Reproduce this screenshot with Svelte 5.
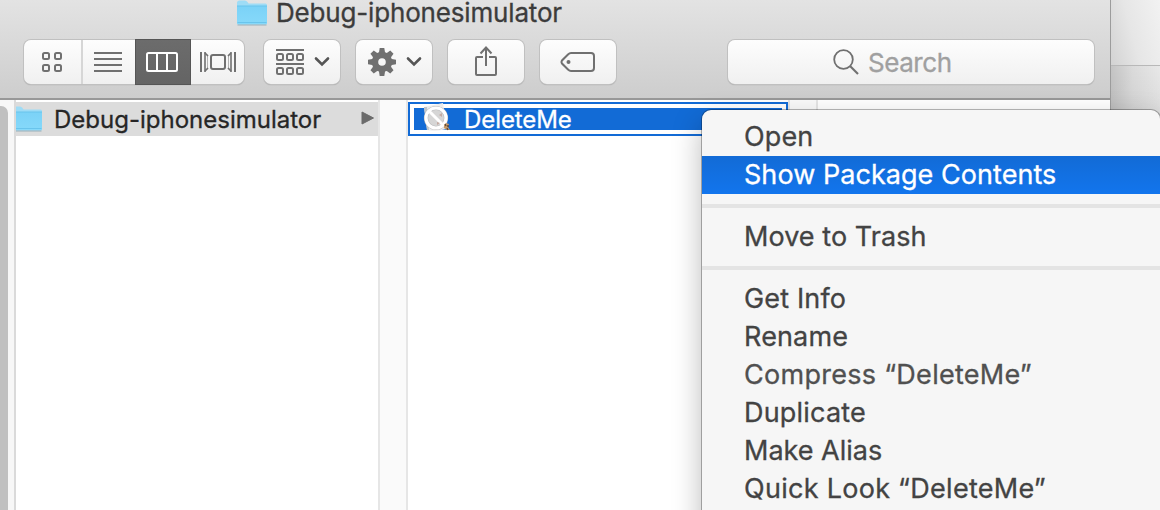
<script>
  const groups = [
    [{ label: 'Open', ls: 0.1 }, { label: 'Show Package Contents', ls: 0.05, active: true }],
    [{ label: 'Move to Trash', ls: 0.05 }],
    [
      { label: 'Get Info', ls: 0.15 },
      { label: 'Rename', ls: 0.15 },
      { label: 'Compress “DeleteMe”', ls: 0.28, soft: true },
      { label: 'Duplicate', ls: 0.2 },
      { label: 'Make Alias', ls: 0 },
      { label: 'Quick Look “DeleteMe”', ls: 0.28 }
    ]
  ];
  const teeth = [0, 45, 90, 135, 180, 225, 270, 315];
</script>

{#snippet folder()}
  <svg class="folder" width="32" height="28" viewBox="0 0 32 28">
    <path d="M1 25V4Q1 1.500 3.500 1.500H9Q10.500 1.500 11.500 3L12.500 4.500H29.500Q31 4.500 31 6V25Z" fill="#9edcf6" />
    <path d="M1 7H31V24Q31 25.500 29.500 25.500H2.500Q1 25.500 1 24Z" fill="url(#fold)" />
    <path d="M1 7H31M1.500 23.500H30.500" stroke="#69c4ec" stroke-width="1" />
    <path d="M1.500 26H30.500" stroke="#7f9eac" stroke-width="1" opacity=".7" />
    <defs><linearGradient id="fold" x2="0" y2="1"><stop stop-color="#7bd2f7" /><stop offset="1" stop-color="#86d9fa" /></linearGradient></defs>
  </svg>
{/snippet}

{#snippet chevron()}
  <svg width="16" height="12" viewBox="0 0 16 12"><path d="M2 2.500L8 8.500L14 2.500" fill="none" stroke="#555" stroke-width="2.600" stroke-linecap="round" /></svg>
{/snippet}

<div class="screen">
  <div class="backdrop"><div class="upper"></div><div class="lower"></div></div>
  <div class="window">
    <header>
      <div class="title">{@render folder()}<span>Debug-iphonesimulator</span></div>
      <div class="tools">
        <div class="button views">
          <div class="seg first">
            <svg width="22" height="22" viewBox="0 0 22 22" fill="none" stroke="#707070" stroke-width="2">
              <rect x="2" y="2" width="6" height="6" rx="1.500" /><rect x="14" y="2" width="6" height="6" rx="1.500" />
              <rect x="2" y="14" width="6" height="6" rx="1.500" /><rect x="14" y="14" width="6" height="6" rx="1.500" />
            </svg>
          </div>
          <div class="seg second">
            <svg width="28" height="22" viewBox="0 0 28 22"><path d="M0 2H28M0 8H28M0 14H28M0 20H28" stroke="#707070" stroke-width="2" /></svg>
          </div>
          <div class="seg on">
            <svg width="32" height="20" viewBox="0 0 32 20" fill="none" stroke="#fff" stroke-width="2"><rect x="1" y="1" width="30" height="18" rx="1.500" /><path d="M11 1V19M21 1V19" /></svg>
          </div>
          <div class="seg last">
            <svg width="36" height="20" viewBox="0 0 36 20" fill="none" stroke="#707070" stroke-width="2">
              <path d="M1 0V20M35 0V20" /><rect x="11" y="3" width="14" height="14" rx="2" />
              <path d="M5 0V20M31 0V20" stroke-width="1.600" /><path d="M5 1L8 4M5 19L8 16M31 1L28 4M31 19L28 16" stroke-width="1.700" /><path d="M7.500 3V17M28.500 3V17" stroke-width=".5" />
            </svg>
          </div>
        </div>
        <div class="button pair">
          <svg width="28" height="28" viewBox="0 0 28 28" fill="none" stroke="#707070" stroke-width="2">
            <path d="M0 2H28M0 16H28" />
            {#each [1, 11, 21] as x}<rect {x} y="6" width="6" height="6" rx="1.500" /><rect {x} y="20" width="6" height="6" rx="1.500" />{/each}
          </svg>
          {@render chevron()}
        </div>
        <div class="button pair">
          <svg width="28" height="28" viewBox="-14 -14 28 28">
            <circle r="7" fill="none" stroke="#707070" stroke-width="6.400" />
            {#each teeth as a}<path d="M-3.200 -8.500L-2.300 -14H2.300L3.200 -8.500Z" fill="#707070" transform="rotate({a})" />{/each}
          </svg>
          {@render chevron()}
        </div>
        <div class="button">
          <svg class="share" width="24" height="32" viewBox="0 0 24 32" fill="none" stroke="#707070" stroke-width="2">
            <path d="M9 12H3Q2 12 2 13V29Q2 30 3 30H21Q22 30 22 29V13Q22 12 21 12H15M12 21V3M6.500 8.500L12 2.500L17.500 8.500" />
          </svg>
        </div>
        <div class="button">
          <svg width="36" height="22" viewBox="0 0 36 22" fill="none" stroke="#707070" stroke-width="2">
            <path d="M11 2H31Q34 2 34 5V17Q34 20 31 20H11Q9.500 20 8 18.500L2 12.500Q1 11 2 9.500L8 3.500Q9.500 2 11 2Z" /><circle cx="8.500" cy="11" r="2" fill="#707070" stroke="none" />
          </svg>
        </div>
        <div class="button search">
          <svg width="26" height="26" viewBox="0 0 26 26" fill="none" stroke="#707070" stroke-width="1.800"><circle cx="10.500" cy="10.500" r="9.300" /><path d="M17 17L25 25" stroke-width="2.200" /></svg>
          <span>Search</span>
        </div>
      </div>
    </header>
    <main>
      <div class="scroll"><div class="thumb"></div></div>
      <div class="column">
        <div class="row"><div class="cut">{@render folder()}</div><span>Debug-iphonesimulator</span>
          <svg class="arrow" width="14" height="14" viewBox="0 0 14 14"><path d="M1 1V13L12.500 7Z" fill="#6b6b6b" stroke="#6b6b6b" stroke-linejoin="round" /></svg>
        </div>
      </div>
      <div class="gutter"></div>
      <div class="column two">
        <div class="target"><div class="fill">
          <svg class="app" width="30" height="30" viewBox="0 0 30 30">
            <path d="M2 4L21 0L25 26Q14 29 5 27Z" fill="#ececec" />
            <path d="M2 4L5 27L7 27L5 4Z" fill="#bfc5ca" />
            <circle cx="14" cy="15" r="10" fill="#d6d6d6" stroke="#b9babc" stroke-width="4.200" /><circle cx="14" cy="15" r="10" fill="none" stroke="#fff" stroke-width="3.200" />
            <path d="M7 8L21 22" stroke="#fff" stroke-width="3" />
            <path d="M17 12l3-2v4zM15 19l3 1-3 2z" fill="#c4aaa2" />
            <path d="M22 22L24 20L27 21L26 24L28 27H25L22 25Z" fill="#c69a6a" /><path d="M23 21L24 23M25 25L26 27M27 23H25" stroke="#59483c" stroke-width="1.300" />
          </svg>
          <span>DeleteMe</span>
        </div></div>
      </div>
      <div class="gutter"></div>
    </main>
  </div>

  <div class="menu">
    {#each groups as group, i}
      {#if i}<div class="rule"></div>{/if}
      {#each group as item}
        <div class="item" class:active={item.active} class:soft={item.soft}><span style="letter-spacing:{item.ls}px">{item.label}</span></div>
      {/each}
    {/each}
  </div>
</div>

<style>
  :global(body) { overflow: hidden; }
  .screen { position: relative; width: 1160px; height: 510px; overflow: hidden; display: flex; background: #e7e7e7; font-family: Inter, "Liberation Sans", sans-serif; -webkit-text-stroke: .3px; }
  .backdrop { position: absolute; right: 0; top: 0; width: 50px; height: 510px; }
  .upper { box-sizing: border-box; height: 66px; background: linear-gradient(75deg, #d2d2d2, #e6e6e6 45%, #f2f2f2); border-bottom: 1px solid #b8b8b8; }
  .lower { height: 444px; background: linear-gradient(90deg, rgba(0,0,0,.16), rgba(0,0,0,.06) 45%, transparent), linear-gradient(#e8e8e8, #dcdcdc 50px); }
  .window { position: relative; box-sizing: border-box; width: 1111px; height: 510px; border-right: 1px solid #9c9c9c; background: #fff; display: flex; flex-direction: column; }
  header { box-sizing: border-box; height: 100px; flex: none; background: linear-gradient(#e3e3e3, #cdcdcd); border-bottom: 2px solid #989898; display: flex; flex-direction: column; }
  .title { height: 40px; display: flex; padding-left: 236px; flex: none; }
  .title .folder { margin-top: -1px; flex: none; }
  .title span { margin-left: 8px; line-height: 26px; height: 26px; font-size: 26px; letter-spacing: -.17px; color: #3c3c3c; }
  .tools { display: flex; padding-left: 24px; gap: 16px; }
  .button { width: 76px; height: 44px; border-radius: 7px; background: linear-gradient(#fdfdfd, #f0f0f0); box-shadow: 0 0 0 1px #c0c0c0, 0 1px 1px 0 #8e8e8e; display: flex; align-items: center; justify-content: center; }
  .views { width: 220px; margin-right: 4px; }
  .seg { height: 44px; display: flex; align-items: center; justify-content: center; box-sizing: border-box; }
  .first { width: 59px; border-right: 2px solid #d6d6d6; padding-right: 1px; }
  .second { width: 52px; padding-right: 2px; }
  .on { width: 56px; height: 46px; background: linear-gradient(#6c6c6c, #646464); border: 1px solid #555; padding-right: 2px; }
  .last { flex: 1; }
  .pair { gap: 10px; padding-left: 2px; box-sizing: border-box; }
  .share { margin-top: -2px; }
  .search { width: 366px; margin-left: 96px; gap: 9px; justify-content: flex-start; box-sizing: border-box; padding-left: 105px; }
  .search span { font-size: 26px; color: #a0a0a0; line-height: 44px; letter-spacing: -.45px; margin-top: 2px; }
  main { flex: 1; display: flex; }
  .scroll { width: 16px; box-sizing: border-box; background: #f7f7f7; border-right: 2px solid #dadada; padding-top: 6px; }
  .thumb { width: 8px; height: 404px; border-radius: 0 7px 0 0; background: #c0c0c0; }
  .column { width: 362px; padding-top: 2px; box-sizing: border-box; }
  .two { width: 380px; }
  .row { height: 34px; background: #dcdcdc; display: flex; align-items: center; width: 363px; }
  .cut { width: 27px; height: 28px; overflow: hidden; display: flex; justify-content: flex-end; }
  .cut .folder { flex: none; }
  .row span { font-size: 24px; color: #262626; margin-left: 11px; width: 307px; flex: none; white-space: nowrap; }
  .arrow { flex: none; margin-top: -2px; }
  .gutter { box-sizing: border-box; width: 30px; background: #fafafa; border: solid #e6e6e6; border-width: 0 2px; }
  .target { box-sizing: border-box; height: 34px; border: 2px solid #126bd6; padding: 4px; }
  .fill { height: 22px; width: 368px; background: #126bd6; display: flex; align-items: center; padding-left: 8px; box-sizing: border-box; }
  .app { margin-top: -2px; flex: none; }
  .fill span { color: #fff; font-size: 24px; margin-left: 12px; line-height: 22px; margin-top: 2px; letter-spacing: -.08px; }
  .menu { position: absolute; left: 702px; top: 110px; width: 458px; height: 440px; box-sizing: border-box; padding-top: 8px; background: #f6f6f6; border-radius: 9px; box-shadow: 0 0 0 1px rgba(0,0,0,.28), 0 12px 30px rgba(0,0,0,.28); }
  .item { height: 38px; line-height: 38px; padding-left: 42px; font-size: 27px; color: #434343; white-space: nowrap; }
  .soft { color: #505050; }
  .active { background: linear-gradient(#126bd6, #1275ed); color: #fff; }
  .rule { height: 4px; margin: 10px 0; background: #e4e4e4; }
</style>
